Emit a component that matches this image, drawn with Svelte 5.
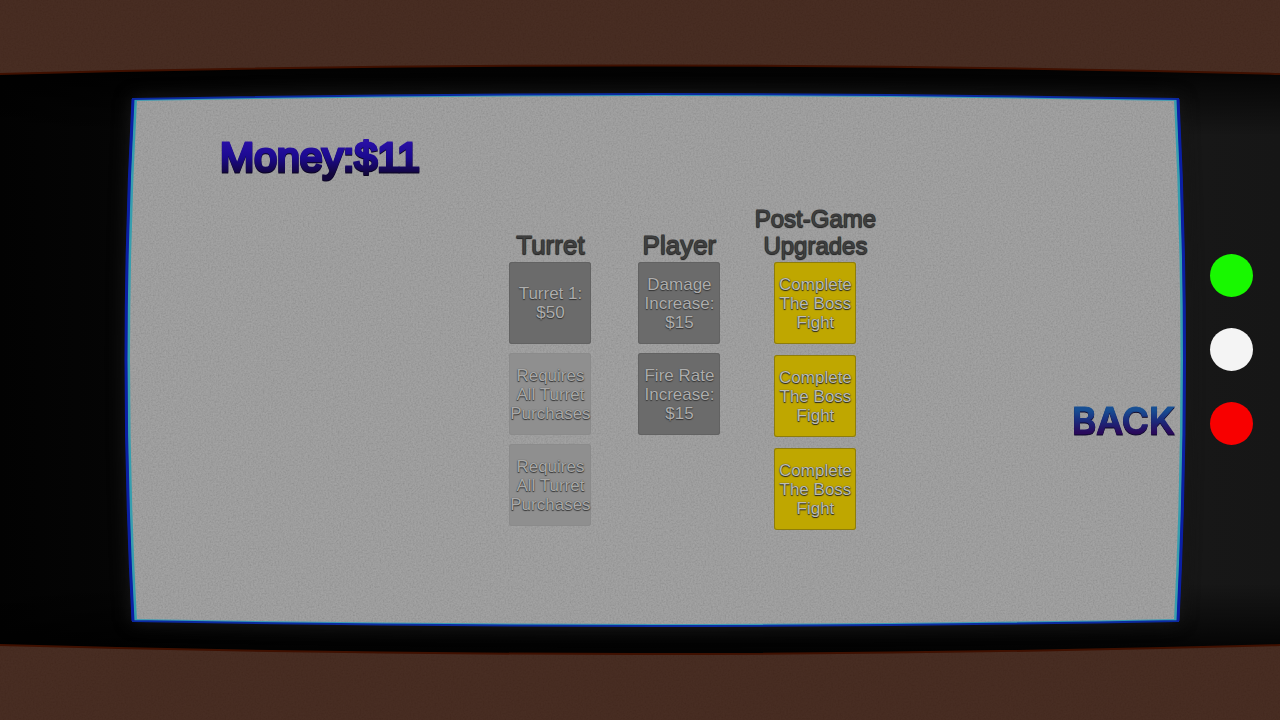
<script>
  let money = $state(11);

  const columns = [
    {
      title: 'Turret',
      kind: 'basic',
      items: [
        { label: 'Turret 1:', price: 50 },
        { label: 'Requires All Turret Purchases', locked: true },
        { label: 'Requires All Turret Purchases', locked: true }
      ]
    },
    {
      title: 'Player',
      kind: 'basic',
      items: [
        { label: 'Damage Increase:', price: 15 },
        { label: 'Fire Rate Increase:', price: 15 }
      ]
    },
    {
      title: 'Post-Game Upgrades',
      kind: 'post',
      items: [
        { label: 'Complete The Boss Fight' },
        { label: 'Complete The Boss Fight' },
        { label: 'Complete The Boss Fight' }
      ]
    }
  ];

  function buy(item) {
    if (item.price && money >= item.price) {
      money -= item.price;
    }
  }
</script>

<div class="scene">
  <!-- desk, console body and the curved screen -->
  <svg class="backdrop" viewBox="0 0 1280 720" preserveAspectRatio="none" aria-hidden="true">
    <defs>
      <linearGradient id="body">
        <stop offset="0" stop-color="#020202" />
        <stop offset="0.09" stop-color="#050505" />
        <stop offset="0.25" stop-color="#0c0c0c" />
        <stop offset="0.9" stop-color="#101010" />
        <stop offset="0.94" stop-color="#171717" />
        <stop offset="1" stop-color="#161616" />
      </linearGradient>
      <linearGradient id="shade" x2="0" y2="1">
        <stop offset="0" stop-color="#000" stop-opacity="0.9" />
        <stop offset="0.12" stop-color="#000" stop-opacity="0" />
        <stop offset="0.88" stop-color="#000" stop-opacity="0" />
        <stop offset="1" stop-color="#000" stop-opacity="0.9" />
      </linearGradient>
      <filter id="soft" x="-5%" y="-10%" width="110%" height="120%" color-interpolation-filters="sRGB">
        <feGaussianBlur stdDeviation="9" />
      </filter>
      <filter id="grain" x="0" y="0" width="100%" height="100%">
        <feTurbulence type="fractalNoise" baseFrequency="0.6" numOctaves="2" seed="4" />
        <feColorMatrix values="1 0 0 0 0  1 0 0 0 0  1 0 0 0 0  0 0 0 0 1" />
      </filter>
      <clipPath id="glass">
        <path d="M133 99 Q655 89 1178 99 Q1191 360 1178 621 Q655 631 133 621 Q119 360 133 99Z" />
      </clipPath>
    </defs>
    <rect width="1280" height="720" fill="#42261b" />
    <rect width="1280" height="720" filter="url(#grain)" opacity="0.04" />
    <path d="M0 74 Q640 57 1280 74 V645 Q640 663 0 645Z" fill="url(#body)" />
    <path d="M0 74 Q640 57 1280 74 V645 Q640 663 0 645Z" fill="url(#shade)" />
    <path d="M0 74 Q640 57 1280 74 M0 645 Q640 663 1280 645" fill="none" stroke="#3f1000" stroke-width="2" />
    <path d="M133 99 Q655 89 1178 99 Q1191 360 1178 621 Q655 631 133 621 Q119 360 133 99Z" fill="#1c1c1c" filter="url(#soft)" />
    <path d="M133 99 Q655 89 1178 99 Q1191 360 1178 621 Q655 631 133 621 Q119 360 133 99Z" fill="#989898" />
    <g clip-path="url(#glass)">
      <rect x="120" y="90" width="1070" height="540" filter="url(#grain)" opacity="0.15" />
      <path d="M133 99 Q655 89 1178 99 M1178 621 Q655 631 133 621" fill="none" stroke="#3a9cb4" stroke-width="4" />
      <path d="M1178 99 Q1191 360 1178 621 M133 621 Q119 360 133 99" fill="none" stroke="#369eae" stroke-width="8" />
    </g>
    <path d="M133 99 Q655 89 1178 99 Q1191 360 1178 621 Q655 631 133 621 Q119 360 133 99Z" fill="none" stroke="#0b2aa0" stroke-width="2" />
    <path d="M1178 99 Q1191 360 1178 621 M133 621 Q119 360 133 99" fill="none" stroke="#0b1fa4" stroke-width="3" />
  </svg>

  <main class="screen">
    <h1 class="money">Money:${money}</h1>
    <div class="shop">
      <div class="columns">
        {#each columns as column}
          <section class="column {column.kind}">
            <h2>{column.title}</h2>
            {#each column.items as item}
              <button class="upgrade" class:locked={item.locked} onclick={() => buy(item)}>
                {item.label}
                {#if item.price}<br />${item.price}{/if}
              </button>
            {/each}
          </section>
        {/each}
      </div>
      <button class="back">BACK</button>
    </div>
  </main>

  <aside class="keys">
    <button class="key green" aria-label="Confirm"></button>
    <button class="key white" aria-label="Select"></button>
    <button class="key red" aria-label="Back"></button>
  </aside>
</div>

<style>
  :global(body) {
    margin: 0;
    background: #472b20;
  }

  button {
    border: none;
    padding: 0;
    font-family: inherit;
    cursor: pointer;
  }

  .scene {
    position: relative;
    display: grid;
    grid-template-columns: 130px 1fr 100px;
    min-height: 100vh;
    font-family: "Liberation Sans", Arial, sans-serif;
  }

  .backdrop {
    position: absolute;
    inset: 0;
    width: 100%;
    height: 100%;
  }

  .screen {
    position: relative;
    grid-column: 2;
    padding: 132px 0 96px;
  }

  .money {
    width: fit-content;
    margin: 0 0 23px 90px;
    font-size: 41px;
    font-weight: normal;
    line-height: 50px;
    color: transparent;
    background: linear-gradient(#2a10a8 16%, #1c0a90 50%, #12063c 84%);
    background-clip: text;
    -webkit-text-stroke: 3px transparent;
    filter: drop-shadow(0 1px 0 #0a0420);
  }

  .shop {
    display: grid;
    grid-template-columns: 5fr auto 4fr;
  }

  .columns {
    grid-column: 2;
    display: flex;
    align-items: flex-start;
  }

  .column {
    display: flex;
    flex-direction: column;
    align-items: center;
    gap: 9px;
    width: 82px;
    margin-right: 47px;
  }

  .column.post {
    gap: 11px;
    width: 122px;
    margin: 0 0 0 -13px;
  }

  h2 {
    display: flex;
    align-items: flex-end;
    height: 54px;
    margin: 0 0 -6px;
    font-size: 26px;
    font-weight: normal;
    line-height: 27px;
    text-align: center;
    color: #444;
    -webkit-text-stroke: 1px #383838;
    text-shadow: 0 1px 1px #111, 0 0 1px #222;
  }

  .post h2 {
    margin-bottom: -8px;
    font-size: 24px;
  }

  .upgrade {
    width: 82px;
    height: 82px;
    border-radius: 3px;
    background: #6b6b6b;
    box-shadow: inset 0 0 0 1px #626262;
    color: #adadad;
    font-size: 17px;
    line-height: 19px;
    text-shadow: 0 1px 1px #333, 0 0 1px #444;
  }

  .locked {
    background: #8f8f8f;
    box-shadow: inset 0 0 0 1px #8b8b8b;
    color: #a8a8a8;
  }

  .post .upgrade {
    background: #bfa700;
    box-shadow: inset 0 0 0 1px #8d7c0c;
    color: #bcbcb4;
    text-shadow: 0 1px 1px #222, 0 0 1px #333;
  }

  .back {
    align-self: end;
    justify-self: end;
    margin: 0 5px 87px 0;
    font-family: Inter, "Liberation Sans", sans-serif;
    font-size: 37px;
    font-weight: 600;
    line-height: 44px;
    color: transparent;
    background: linear-gradient(#174f94 25%, #1b2a7c 50%, #2a0a5c 76%);
    background-clip: text;
    -webkit-text-stroke: 1px transparent;
    filter: drop-shadow(0 1px 0 #0c0628);
  }

  .keys {
    position: relative;
    display: flex;
    flex-direction: column;
    align-items: center;
    justify-content: center;
    gap: 31px;
    padding: 0 0 21px 2px;
  }

  .key {
    width: 43px;
    height: 43px;
    border-radius: 50%;
  }

  .green {
    background: #18f800;
  }

  .white {
    background: #f4f4f4;
  }

  .red {
    background: #f80000;
  }
</style>
